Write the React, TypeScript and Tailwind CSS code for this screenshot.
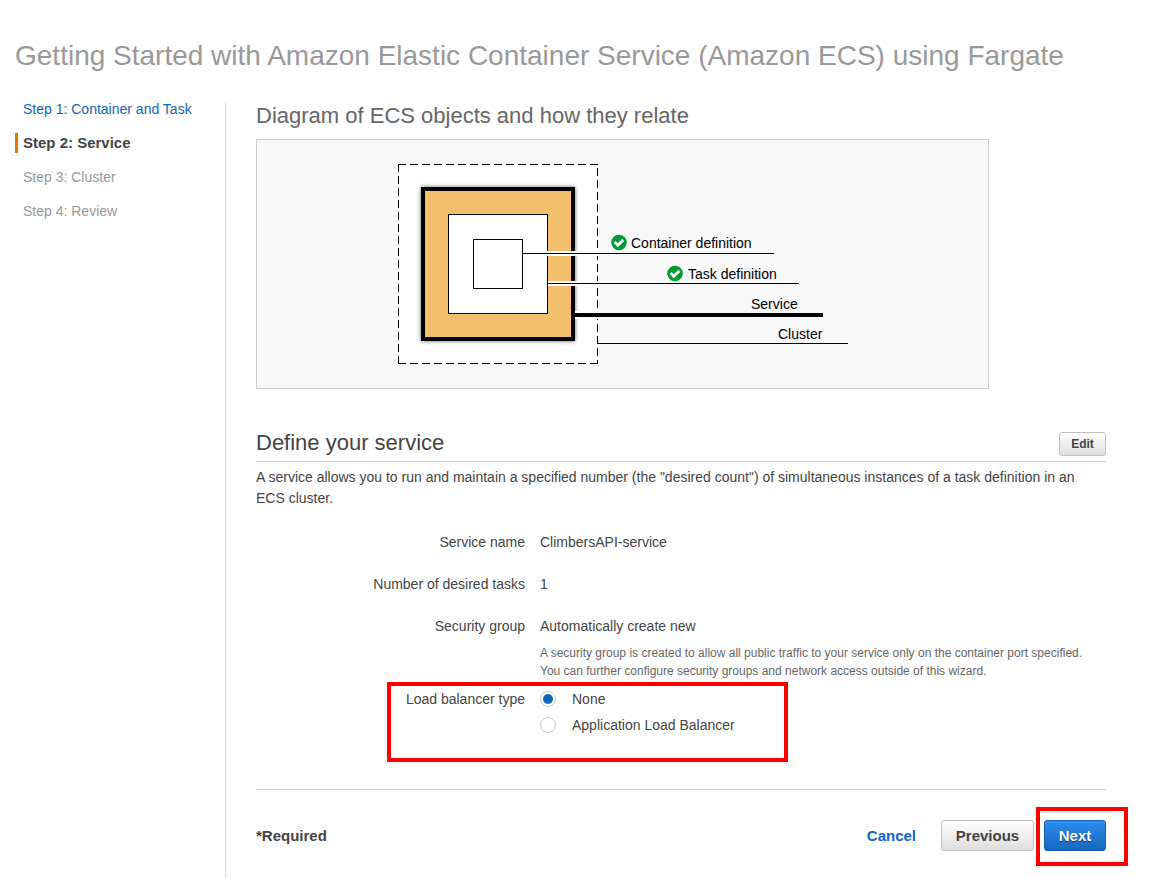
import { useState } from "react";
import type { ReactNode } from "react";

const steps = [
  { label: "Step 1: Container and Task", state: "done" },
  { label: "Step 2: Service", state: "current" },
  { label: "Step 3: Cluster", state: "todo" },
  { label: "Step 4: Review", state: "todo" },
];

const balancers = ["None", "Application Load Balancer"];

const greyButton =
  "rounded-[3px] border border-[#bfbfbf] bg-linear-to-b from-white to-[#dedede] font-bold text-[#444]";

// Red marker frame drawn over the part of the page it surrounds.
function Highlight({ className }: { className: string }) {
  return (
    <span
      aria-hidden="true"
      className={"pointer-events-none absolute border-4 border-[#ff0000] " + className}
    />
  );
}

function StepNav() {
  return (
    <nav className="w-[210px] shrink-0">
      <ol className="flex flex-col gap-[14px]">
        {steps.map((s) => (
          <li
            key={s.label}
            className={
              s.state === "current"
                ? "border-l-[3px] border-[#e07700] pl-[5px] text-[15px] font-bold text-[#444]"
                : "pl-2 text-[#999]"
            }
          >
            {s.state === "done" ? (
              <a href="#container" className="text-[#1166bb]">
                {s.label}
              </a>
            ) : (
              s.label
            )}
          </li>
        ))}
      </ol>
    </nav>
  );
}

function Check({ x, y }: { x: number; y: number }) {
  return (
    <g transform={`translate(${x} ${y})`}>
      <circle r="7.8" fill="#009933" />
      <path d="M-4.4 -0.4 L-1.2 2.8 L4.4 -2.8" fill="none" stroke="#fff" strokeWidth="2.8" />
    </g>
  );
}

function EcsDiagram() {
  return (
    <div className="flex max-w-[733px] justify-center border border-[#ccc] bg-[#f8f8f8]">
      <svg
        width="451"
        height="248"
        viewBox="0 0 451 248"
        className="font-['Liberation_Sans',Arial,sans-serif] text-sm"
        role="img"
        aria-label="ECS objects"
      >
        <defs>
          <filter id="glow" x="-10%" y="-10%" width="120%" height="120%">
            <feGaussianBlur stdDeviation="2" />
          </filter>
        </defs>

        {/* cluster */}
        <rect x="1.5" y="24.5" width="199" height="199" fill="#fff" />
        <path d="M1 24.5H201M1 223.5H201M1.5 24V224" stroke="#000" strokeDasharray="8 4" />
        <path d="M200.5 28V224" stroke="#000" strokeDasharray="8 4" />
        <path d="M201 203.5H451" stroke="#000" />

        {/* service */}
        <rect x="24" y="47" width="154" height="154" fill="#000" opacity="0.6" filter="url(#glow)" />
        <rect x="26" y="49" width="150" height="150" fill="#f2bf6f" stroke="#000" strokeWidth="4" />
        <path d="M178 175H201" stroke="#fff" strokeWidth="8" />
        <path d="M178 175H426" stroke="#000" strokeWidth="4" />

        {/* task */}
        <rect x="51.5" y="74.5" width="99" height="99" fill="#fff" stroke="#000" />
        <path d="M151 143.5H201" stroke="#fff" strokeWidth="5" />
        <path d="M151 143.5H402" stroke="#000" />

        {/* container */}
        <rect x="76.5" y="99.5" width="49" height="49" fill="#fff" stroke="#000" />
        <path d="M126 113.5H201" stroke="#fff" strokeWidth="5" />
        <path d="M126 113.5H377" stroke="#000" />

        <Check x={222} y={102.5} />
        <Check x={278} y={133.5} />
        <text x="234" y="108">Container definition</text>
        <text x="291" y="139">Task definition</text>
        <text x="354" y="169">Service</text>
        <text x="381" y="199">Cluster</text>
      </svg>
    </div>
  );
}

function Row({ label, children }: { label: string; children: ReactNode }) {
  return (
    <div className="flex gap-[15px]">
      <dt className="w-[269px] shrink-0 text-right">{label}</dt>
      <dd className="flex-1">{children}</dd>
    </div>
  );
}

export default function App() {
  const [balancer, setBalancer] = useState("None");

  return (
    <div className="flex min-h-screen flex-col bg-white pt-[38px] pl-[15px] font-['Liberation_Sans',Arial,sans-serif] text-sm leading-5 text-[#444]">
      <h1 className="mb-[25px] text-[28px] leading-9 text-[#999]">
        Getting Started with Amazon Elastic Container Service (Amazon ECS) using Fargate
      </h1>

      <div className="flex flex-1">
        <StepNav />

        <main className="mt-[3px] flex-1 border-l border-[#ddd] pr-[46px] pb-[26px] pl-[30px]">
          <h2 className="mb-[9px] text-[22px] leading-7 text-[#666]">
            Diagram of ECS objects and how they relate
          </h2>
          <EcsDiagram />

          <form onSubmit={(e) => e.preventDefault()}>
            <div className="mt-[41px] flex items-end justify-between border-b border-[#ccc] pb-[5px]">
              <h2 className="text-[22px] leading-[26px]">Define your service</h2>
              <button type="button" className={greyButton + " h-6 w-[47px] text-xs"}>
                Edit
              </button>
            </div>
            <p className="mt-[5px] leading-[21px]">
              A service allows you to run and maintain a specified number (the "desired count") of
              simultaneous instances of a task definition in an ECS cluster.
            </p>

            <dl className="mt-[23px] flex flex-col gap-[22px]">
              <Row label="Service name">ClimbersAPI-service</Row>
              <Row label="Number of desired tasks">1</Row>
              <Row label="Security group">
                Automatically create new
                <p className="mt-2 pr-3 text-xs leading-[18px] text-[#666]">
                  A security group is created to allow all public traffic to your service only on the
                  container port specified. You can further configure security groups and network
                  access outside of this wizard.
                </p>
              </Row>
            </dl>

            <div
              role="radiogroup"
              aria-labelledby="lb-type"
              className="relative mt-[9px] flex gap-[15px]"
            >
              <span id="lb-type" className="w-[269px] shrink-0 text-right">
                Load balancer type
              </span>
              <div className="flex flex-col gap-[6px]">
                {balancers.map((b) => (
                  <label key={b} className="flex items-center gap-4">
                    <input
                      type="radio"
                      name="balancer"
                      value={b}
                      checked={balancer === b}
                      onChange={() => setBalancer(b)}
                      className="size-4 appearance-none rounded-full border border-[#ccc] bg-white bg-clip-content p-[2px] checked:bg-[#1166bb]"
                    />
                    {b}
                  </label>
                ))}
              </div>
              <Highlight className="-top-[7px] left-[131px] h-20 w-[401px]" />
            </div>

            <div className="mt-[54px] flex items-center border-t border-[#ccc] pt-[30px] text-[15px] font-bold">
              <span>*Required</span>
              <a href="#cancel" className="mr-[25px] ml-auto text-[#1166cc]">
                Cancel
              </a>
              <button type="button" className={greyButton + " mr-[10px] h-[31px] w-[93px]"}>
                Previous
              </button>
              <div className="relative">
                <button
                  type="submit"
                  className="block h-[31px] w-[62px] rounded-[3px] border border-[#1560b5] bg-linear-to-b from-[#2d8cee] to-[#1767bd] text-white text-shadow-[0_1px_1px_#0008]"
                >
                  Next
                </button>
                <Highlight className="-top-[13px] -left-2 h-[59px] w-[92px]" />
              </div>
            </div>
          </form>
        </main>
      </div>
    </div>
  );
}
